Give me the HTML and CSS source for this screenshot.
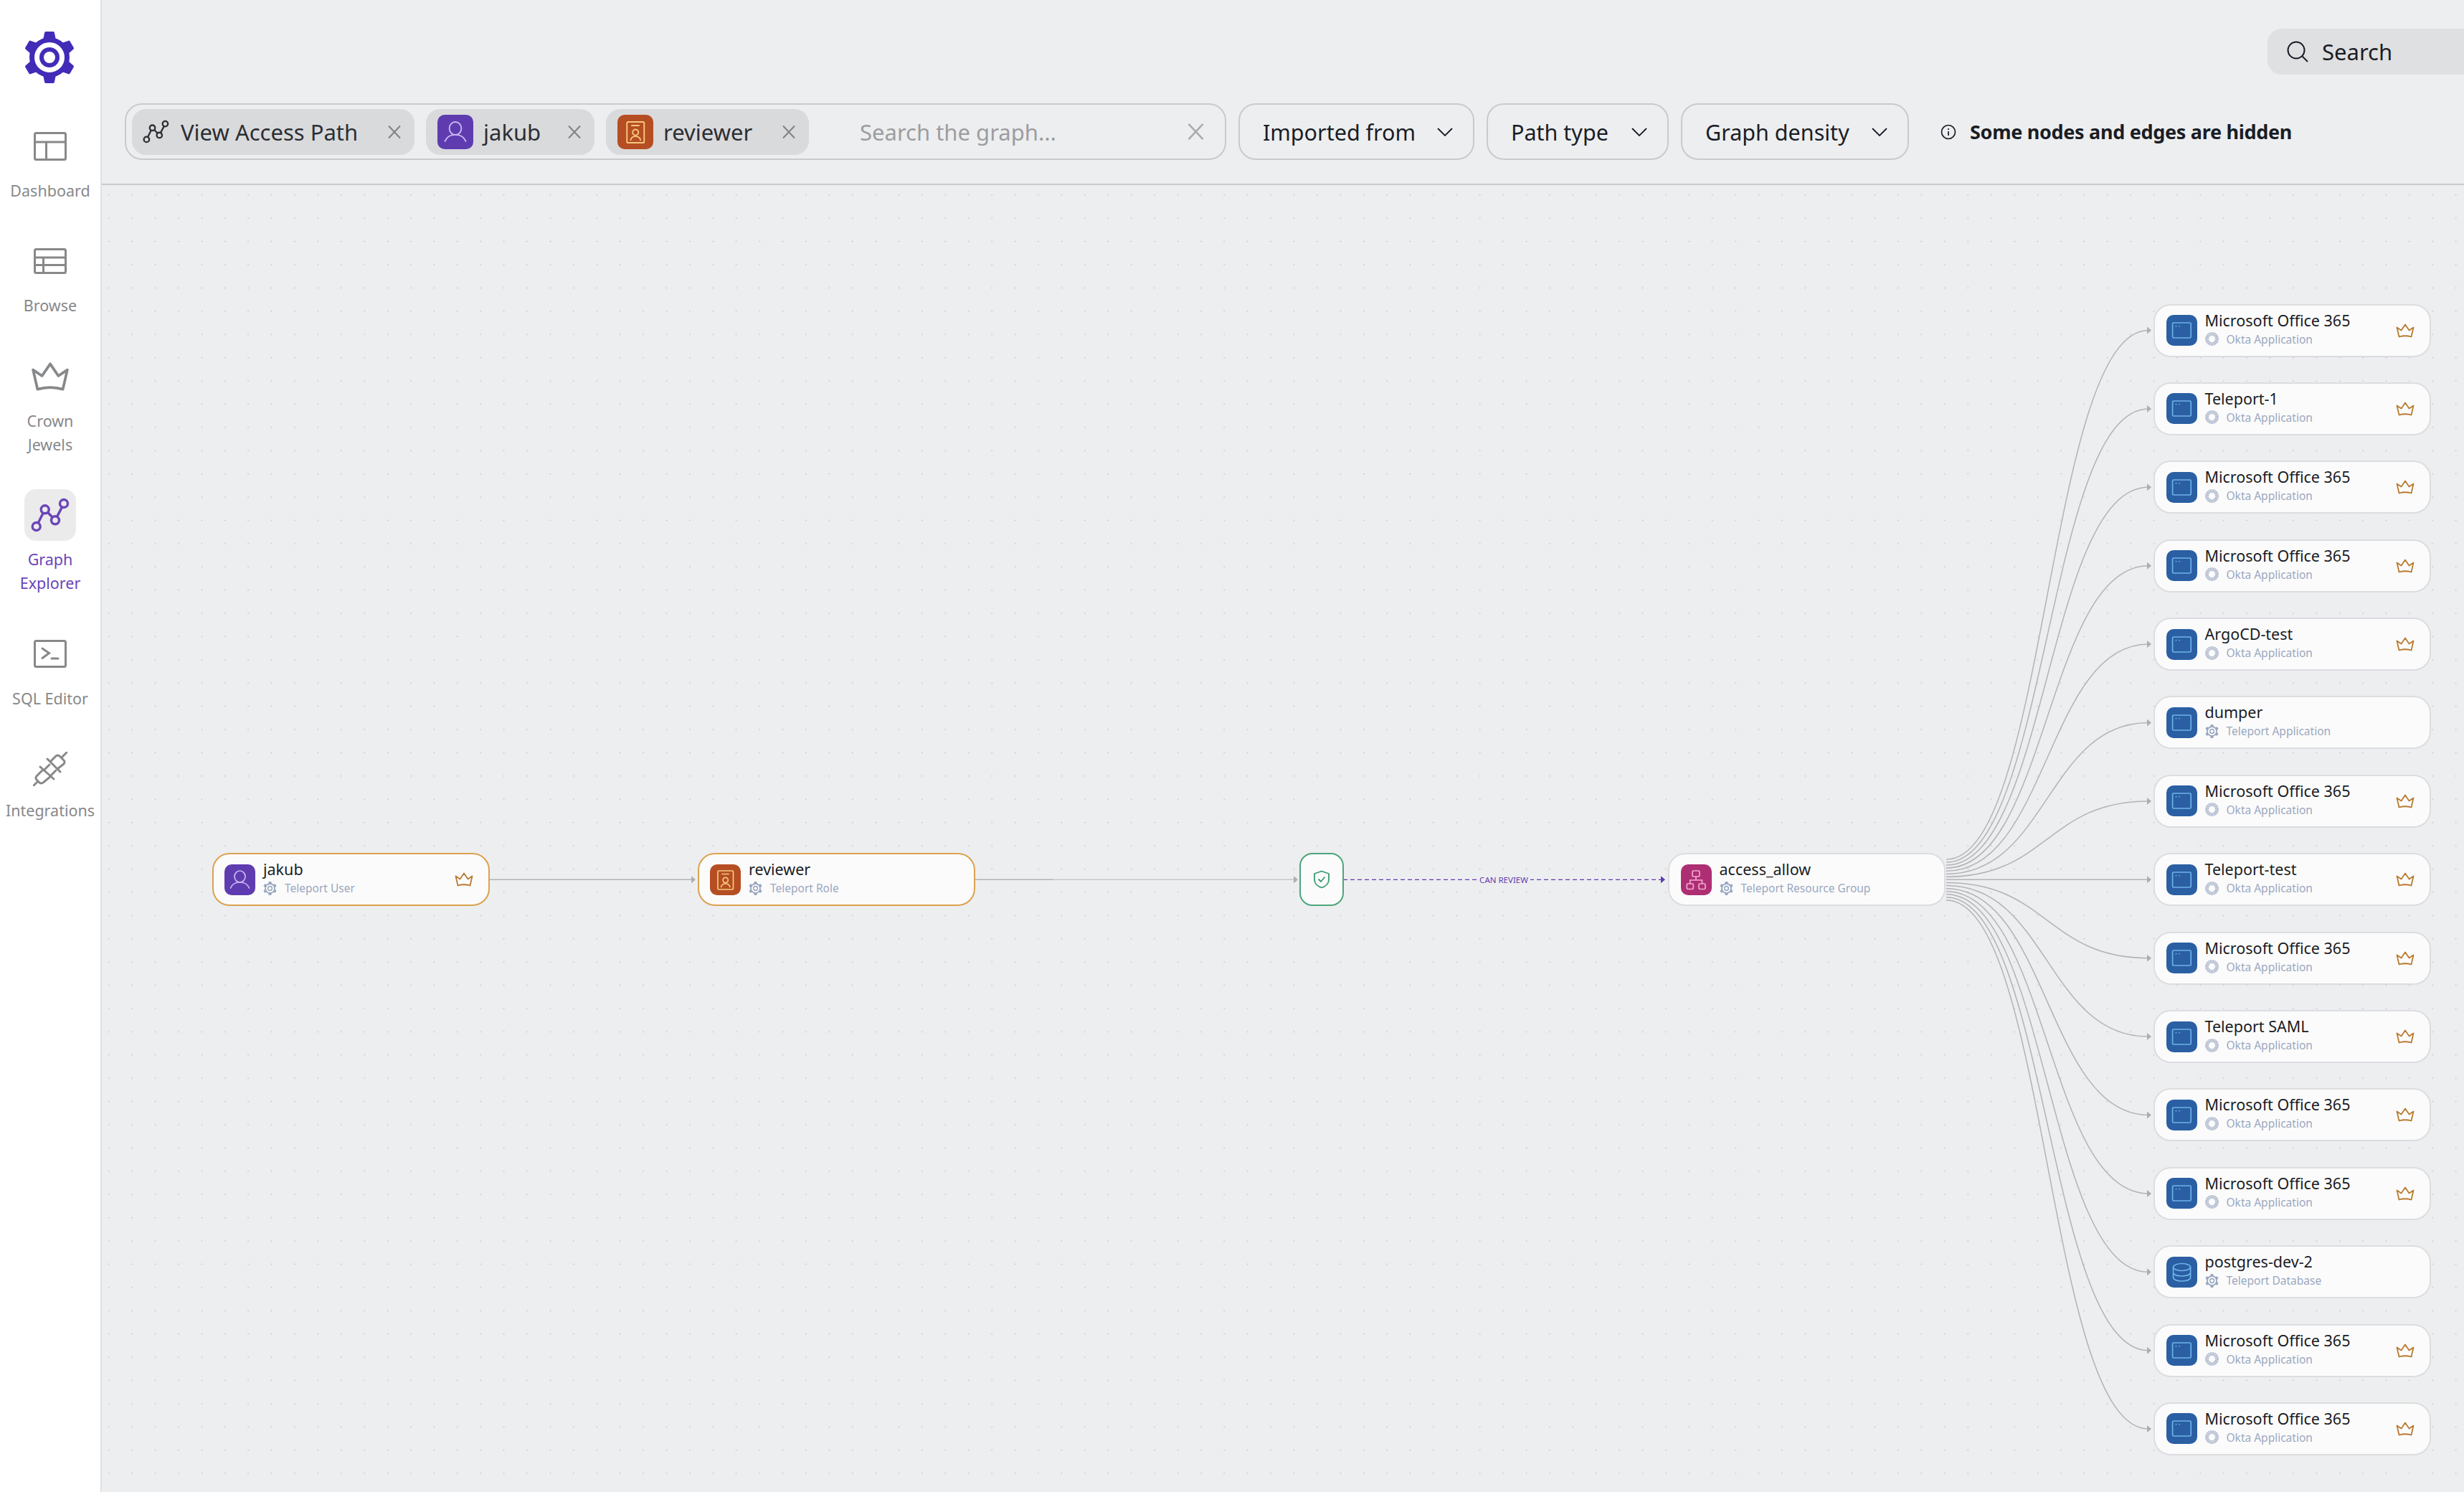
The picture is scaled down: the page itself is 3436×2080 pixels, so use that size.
FILE: index.html
```html
<!DOCTYPE html>
<html lang="en">

<head>
    <meta charset="UTF-8">
    <meta name="viewport" content="width=device-width, initial-scale=1.0">
    <title>Graph Explorer</title>
    <link rel="stylesheet" href="styles.css">
</head>

<body>
    <!-- shared icons -->
    <svg class="defs" width="0" height="0">
        <symbol id="i-gear" viewBox="0 0 70 72">
            <g fill="currentColor">
                <circle cx="35" cy="36" r="28"></circle>
                <path d="M26 12 L28 2 Q28 0 30 0 L40 0 Q42 0 42 2 L44 12 Z"></path>
                <path d="M26 12 L28 2 Q28 0 30 0 L40 0 Q42 0 42 2 L44 12 Z" transform="rotate(60 35 36)"></path>
                <path d="M26 12 L28 2 Q28 0 30 0 L40 0 Q42 0 42 2 L44 12 Z" transform="rotate(120 35 36)"></path>
                <path d="M26 12 L28 2 Q28 0 30 0 L40 0 Q42 0 42 2 L44 12 Z" transform="rotate(180 35 36)"></path>
                <path d="M26 12 L28 2 Q28 0 30 0 L40 0 Q42 0 42 2 L44 12 Z" transform="rotate(240 35 36)"></path>
                <path d="M26 12 L28 2 Q28 0 30 0 L40 0 Q42 0 42 2 L44 12 Z" transform="rotate(300 35 36)"></path>
            </g>
            <circle cx="35" cy="36" r="17.5" fill="none" stroke="#fff" stroke-width="7"></circle>
            <circle cx="35" cy="36" r="8" fill="#fff"></circle>
        </symbol>
        <symbol id="i-burst" viewBox="0 0 19 19">
            <circle cx="9.5" cy="9.5" r="7" fill="none" stroke="currentColor" stroke-width="5" stroke-dasharray="1.1 .8"></circle>
        </symbol>
        <symbol id="i-crown" viewBox="0 0 26 20">
            <path d="M1.5 5.5 L7.5 9.5 L13 1.5 L18.5 9.5 L24.5 5.5 L21.5 18.5 Q13 16 4.5 18.5 Z" fill="none" stroke="currentColor" stroke-width="1.8" stroke-linejoin="round"></path>
        </symbol>
        <symbol id="i-graph" viewBox="0 0 72 72">
            <g fill="none" stroke="currentColor" stroke-width="3.4">
                <circle cx="16.7" cy="52" r="5.5"></circle>
                <circle cx="28.7" cy="28.3" r="5.5"></circle>
                <circle cx="43" cy="43.3" r="5.5"></circle>
                <circle cx="55" cy="20" r="5.5"></circle>
                <path d="M19.2 47.1 L26.2 33.2 M32.5 32.3 L39.2 39.3 M45.5 38.4 L52.5 24.9"></path>
            </g>
        </symbol>
        <symbol id="i-user" viewBox="0 0 43 43">
            <g fill="none" stroke="currentColor" stroke-width="1.7" stroke-linecap="round">
                <ellipse cx="21.5" cy="17" rx="7.5" ry="8"></ellipse>
                <path d="M8.5 33 C11 27 16 25 21.5 25 C27 25 32 27 34.5 33"></path>
            </g>
        </symbol>
        <symbol id="i-role" viewBox="0 0 43 43">
            <g fill="none" stroke="currentColor" stroke-width="1.7" stroke-linecap="round">
                <rect x="11" y="9" width="21.5" height="26" rx="1.5"></rect>
                <path d="M17 13.5 H26"></path>
                <circle cx="21.7" cy="22" r="3.6"></circle>
                <path d="M15.5 31.5 C16.5 28 19 27 21.7 27 C24.5 27 27 28 28 31.5"></path>
            </g>
        </symbol>
        <symbol id="i-group" viewBox="0 0 43 43">
            <g fill="none" stroke="currentColor" stroke-width="1.7">
                <rect x="16" y="9" width="10" height="8" rx="1.5"></rect>
                <rect x="8.3" y="27" width="9" height="7.5" rx="1.5"></rect>
                <rect x="25" y="27" width="9" height="7.5" rx="1.5"></rect>
                <path d="M21 17 V22 M12.8 27 V22 H29.5 V27"></path>
            </g>
        </symbol>
        <symbol id="i-app" viewBox="0 0 43 43">
            <rect x="8.6" y="11" width="25.6" height="21" rx="1.5" fill="none" stroke="currentColor" stroke-width="1.7"></rect>
            <circle cx="13.5" cy="15.7" r=".9" fill="currentColor"></circle>
            <circle cx="18" cy="15.7" r=".9" fill="currentColor"></circle>
        </symbol>
        <symbol id="i-db" viewBox="0 0 43 43">
            <g fill="none" stroke="currentColor" stroke-width="1.7">
                <ellipse cx="21.6" cy="14.5" rx="12" ry="5"></ellipse>
                <path d="M9.6 14.5 V29 C9.6 32 15 34 21.6 34 C28 34 33.6 32 33.6 29 V14.5 M9.6 22 C9.6 25 15 27 21.6 27 C28 27 33.6 25 33.6 22"></path>
            </g>
        </symbol>
        <symbol id="i-x" viewBox="0 0 20 20">
            <path d="M2 1.5 L18 18.5 M18 1.5 L2 18.5" fill="none" stroke="currentColor" stroke-width="2"></path>
        </symbol>
        <symbol id="i-chevron" viewBox="0 0 22 12">
            <path d="M1 1 L11 11 L21 1" fill="none" stroke="currentColor" stroke-width="1.8"></path>
        </symbol>
    </svg>

    <aside class="sidebar">
        <svg class="logo"><use href="#i-gear"></use></svg>
        <nav class="nav">
            <a class="nav-item">
                <span class="nav-icon">
                    <svg width="46" height="40" viewBox="0 0 46 40" fill="none" stroke="currentColor" stroke-width="3">
                        <rect x="1.5" y="1.5" width="43" height="37" rx="2"></rect>
                        <path d="M1.5 14 H44.5 M17.5 14 V38.5"></path>
                    </svg>
                </span>
                Dashboard
            </a>
            <a class="nav-item">
                <span class="nav-icon">
                    <svg width="46" height="36" viewBox="0 0 46 36" fill="none" stroke="currentColor" stroke-width="3">
                        <rect x="1.5" y="1.5" width="43" height="33" rx="2"></rect>
                        <path d="M1.5 13 H44.5 M1.5 23.5 H44.5 M13.5 13 V34.5"></path>
                    </svg>
                </span>
                Browse
            </a>
            <a class="nav-item">
                <span class="nav-icon">
                    <svg width="54" height="42"><use href="#i-crown"></use></svg>
                </span>
                Crown<br>Jewels
            </a>
            <a class="nav-item active">
                <span class="nav-icon">
                    <svg width="72" height="72"><use href="#i-graph"></use></svg>
                </span>
                Graph<br>Explorer
            </a>
            <a class="nav-item">
                <span class="nav-icon">
                    <svg width="46" height="39" viewBox="0 0 46 39" fill="none" stroke="currentColor" stroke-width="3" stroke-linecap="round">
                        <rect x="1.5" y="1.5" width="43" height="36" rx="2"></rect>
                        <path d="M12 12 L21.5 18.5 L12 25.5 M25 26 H34"></path>
                    </svg>
                </span>
                SQL Editor
            </a>
            <a class="nav-item">
                <span class="nav-icon">
                    <svg width="48" height="48" viewBox="0 0 48 48" fill="none" stroke="currentColor" stroke-width="3" stroke-linecap="round">
                        <path d="M20 10 L38 28 M24 14 L32 6 Q35 4 37 6 L43 12 Q45 14 43 17 L34 24 M40 8 L47 1"></path>
                        <path d="M10 21 L29 38 M14 25 L5 34 Q3 37 5 39 L9 43 Q12 45 14 43 L25 34 M7 41 L1 47"></path>
                        <path d="M16 25 L23 18 M25 33 L32 26"></path>
                    </svg>
                </span>
                Integrations
            </a>
        </nav>
    </aside>

    <main class="main">
        <header class="header">
            <div class="top-row">
                <div class="global-search">
                    <svg width="30" height="30" viewBox="0 0 30 30" fill="none" stroke="currentColor" stroke-width="2">
                        <circle cx="13" cy="13" r="11.5"></circle>
                        <path d="M21.5 21.5 L29 29"></path>
                    </svg>
                    <span>Search</span>
                </div>
            </div>
            <div class="toolbar">
                <div class="search-box">
                    <div class="chip chip-path">
                        <svg class="chip-graph"><use href="#i-graph"></use></svg>
                        <span>View Access Path</span>
                        <svg class="chip-x"><use href="#i-x"></use></svg>
                    </div>
                    <div class="chip chip-user">
                        <svg class="chip-icon purple"><use href="#i-user"></use></svg>
                        <span>jakub</span>
                        <svg class="chip-x"><use href="#i-x"></use></svg>
                    </div>
                    <div class="chip chip-role">
                        <svg class="chip-icon orange"><use href="#i-role"></use></svg>
                        <span>reviewer</span>
                        <svg class="chip-x"><use href="#i-x"></use></svg>
                    </div>
                    <span class="placeholder">Search the graph...</span>
                    <svg class="clear-x"><use href="#i-x"></use></svg>
                </div>
                <button class="drop drop-imported">Imported from<svg><use href="#i-chevron"></use></svg></button>
                <button class="drop drop-type">Path type<svg><use href="#i-chevron"></use></svg></button>
                <button class="drop drop-density">Graph density<svg><use href="#i-chevron"></use></svg></button>
                <div class="hidden-note">
                    <svg width="22" height="22" viewBox="0 0 22 22" fill="none" stroke="currentColor" stroke-width="1.7">
                        <circle cx="11" cy="11" r="9.5"></circle>
                        <path d="M11 10 V16 M11 6 V8"></path>
                    </svg>
                    <span>Some nodes and edges are hidden</span>
                </div>
            </div>
        </header>

        <section class="canvas">
            <!-- edges use page coordinates -->
            <svg class="edges" viewBox="142 258 3294 1822">
                <defs>
                    <marker id="arrow" markerUnits="userSpaceOnUse" markerWidth="7" markerHeight="10" refX="2" refY="5" orient="auto">
                        <path d="M0 0 L6 5 L0 10 Z" fill="#adaeb1"></path>
                    </marker>
                    <marker id="arrow-purple" markerUnits="userSpaceOnUse" markerWidth="7" markerHeight="10" refX="2" refY="5" orient="auto">
                        <path d="M0 0 L6 5 L0 10 Z" fill="#5e3cb0"></path>
                    </marker>
                </defs>
                <g class="edge-lines">
                    <path marker-end="url(#arrow)" d="M683 1226.3 H966"></path>
                    <path d="M1360 1226.3 H1469"></path>
                    <path class="lighter" marker-end="url(#arrow)" d="M1469 1226.3 H1806"></path>
                    <path marker-end="url(#arrow)" d="M2714 1198 C2855 1198 2855 460.5 2996 460.5"></path>
                    <path marker-end="url(#arrow)" d="M2714 1202.1 C2855 1202.1 2855 569.9 2996 569.9"></path>
                    <path marker-end="url(#arrow)" d="M2714 1206.1 C2855 1206.1 2855 679.3 2996 679.3"></path>
                    <path marker-end="url(#arrow)" d="M2714 1210.2 C2855 1210.2 2855 788.7 2996 788.7"></path>
                    <path marker-end="url(#arrow)" d="M2714 1214.3 C2855 1214.3 2855 898.1 2996 898.1"></path>
                    <path marker-end="url(#arrow)" d="M2714 1218.4 C2855 1218.4 2855 1007.5 2996 1007.5"></path>
                    <path marker-end="url(#arrow)" d="M2714 1222.4 C2855 1222.4 2855 1116.9 2996 1116.9"></path>
                    <path marker-end="url(#arrow)" d="M2714 1226.3 H2996"></path>
                    <path marker-end="url(#arrow)" d="M2714 1230.6 C2855 1230.6 2855 1335.7 2996 1335.7"></path>
                    <path marker-end="url(#arrow)" d="M2714 1234.6 C2855 1234.6 2855 1445.1 2996 1445.1"></path>
                    <path marker-end="url(#arrow)" d="M2714 1238.7 C2855 1238.7 2855 1554.5 2996 1554.5"></path>
                    <path marker-end="url(#arrow)" d="M2714 1242.8 C2855 1242.8 2855 1663.9 2996 1663.9"></path>
                    <path marker-end="url(#arrow)" d="M2714 1246.8 C2855 1246.8 2855 1773.3 2996 1773.3"></path>
                    <path marker-end="url(#arrow)" d="M2714 1250.9 C2855 1250.9 2855 1882.7 2996 1882.7"></path>
                    <path marker-end="url(#arrow)" d="M2714 1255 C2855 1255 2855 1992.1 2996 1992.1"></path>
                </g>
                <path class="edge-dashed" marker-end="url(#arrow-purple)" d="M1873 1226.3 H2318"></path>
            </svg>
            <span class="edge-label">CAN REVIEW</span>

            <div class="node node-jakub">
                <svg class="node-icon purple"><use href="#i-user"></use></svg>
                <div class="node-text">
                    <div class="node-title">jakub</div>
                    <div class="node-sub"><svg><use href="#i-gear"></use></svg>Teleport User</div>
                </div>
                <svg class="crown"><use href="#i-crown"></use></svg>
            </div>
            <div class="node node-reviewer">
                <svg class="node-icon orange"><use href="#i-role"></use></svg>
                <div class="node-text">
                    <div class="node-title">reviewer</div>
                    <div class="node-sub"><svg><use href="#i-gear"></use></svg>Teleport Role</div>
                </div>
            </div>
            <div class="shield-node">
                <svg width="24" height="26" viewBox="0 0 24 26" fill="none" stroke="currentColor" stroke-width="1.8" stroke-linejoin="round">
                    <path d="M12 1.5 L22 5 V13 C22 19 17 23 12 24.5 C7 23 2 19 2 13 V5 Z"></path>
                    <path d="M7.5 12.5 L11 16 L16.5 9.5"></path>
                </svg>
            </div>
            <div class="node node-group">
                <svg class="node-icon pink"><use href="#i-group"></use></svg>
                <div class="node-text">
                    <div class="node-title">access_allow</div>
                    <div class="node-sub"><svg><use href="#i-gear"></use></svg>Teleport Resource Group</div>
                </div>
            </div>

            <div class="targets">
                <div class="node">
                    <svg class="node-icon blue"><use href="#i-app"></use></svg>
                    <div class="node-text">
                        <div class="node-title">Microsoft Office 365</div>
                        <div class="node-sub"><svg><use href="#i-burst"></use></svg>Okta Application</div>
                    </div>
                    <svg class="crown"><use href="#i-crown"></use></svg>
                </div>
                <div class="node">
                    <svg class="node-icon blue"><use href="#i-app"></use></svg>
                    <div class="node-text">
                        <div class="node-title">Teleport-1</div>
                        <div class="node-sub"><svg><use href="#i-burst"></use></svg>Okta Application</div>
                    </div>
                    <svg class="crown"><use href="#i-crown"></use></svg>
                </div>
                <div class="node">
                    <svg class="node-icon blue"><use href="#i-app"></use></svg>
                    <div class="node-text">
                        <div class="node-title">Microsoft Office 365</div>
                        <div class="node-sub"><svg><use href="#i-burst"></use></svg>Okta Application</div>
                    </div>
                    <svg class="crown"><use href="#i-crown"></use></svg>
                </div>
                <div class="node">
                    <svg class="node-icon blue"><use href="#i-app"></use></svg>
                    <div class="node-text">
                        <div class="node-title">Microsoft Office 365</div>
                        <div class="node-sub"><svg><use href="#i-burst"></use></svg>Okta Application</div>
                    </div>
                    <svg class="crown"><use href="#i-crown"></use></svg>
                </div>
                <div class="node">
                    <svg class="node-icon blue"><use href="#i-app"></use></svg>
                    <div class="node-text">
                        <div class="node-title">ArgoCD-test</div>
                        <div class="node-sub"><svg><use href="#i-burst"></use></svg>Okta Application</div>
                    </div>
                    <svg class="crown"><use href="#i-crown"></use></svg>
                </div>
                <div class="node">
                    <svg class="node-icon blue"><use href="#i-app"></use></svg>
                    <div class="node-text">
                        <div class="node-title">dumper</div>
                        <div class="node-sub"><svg><use href="#i-gear"></use></svg>Teleport Application</div>
                    </div>
                </div>
                <div class="node">
                    <svg class="node-icon blue"><use href="#i-app"></use></svg>
                    <div class="node-text">
                        <div class="node-title">Microsoft Office 365</div>
                        <div class="node-sub"><svg><use href="#i-burst"></use></svg>Okta Application</div>
                    </div>
                    <svg class="crown"><use href="#i-crown"></use></svg>
                </div>
                <div class="node">
                    <svg class="node-icon blue"><use href="#i-app"></use></svg>
                    <div class="node-text">
                        <div class="node-title">Teleport-test</div>
                        <div class="node-sub"><svg><use href="#i-burst"></use></svg>Okta Application</div>
                    </div>
                    <svg class="crown"><use href="#i-crown"></use></svg>
                </div>
                <div class="node">
                    <svg class="node-icon blue"><use href="#i-app"></use></svg>
                    <div class="node-text">
                        <div class="node-title">Microsoft Office 365</div>
                        <div class="node-sub"><svg><use href="#i-burst"></use></svg>Okta Application</div>
                    </div>
                    <svg class="crown"><use href="#i-crown"></use></svg>
                </div>
                <div class="node">
                    <svg class="node-icon blue"><use href="#i-app"></use></svg>
                    <div class="node-text">
                        <div class="node-title">Teleport SAML</div>
                        <div class="node-sub"><svg><use href="#i-burst"></use></svg>Okta Application</div>
                    </div>
                    <svg class="crown"><use href="#i-crown"></use></svg>
                </div>
                <div class="node">
                    <svg class="node-icon blue"><use href="#i-app"></use></svg>
                    <div class="node-text">
                        <div class="node-title">Microsoft Office 365</div>
                        <div class="node-sub"><svg><use href="#i-burst"></use></svg>Okta Application</div>
                    </div>
                    <svg class="crown"><use href="#i-crown"></use></svg>
                </div>
                <div class="node">
                    <svg class="node-icon blue"><use href="#i-app"></use></svg>
                    <div class="node-text">
                        <div class="node-title">Microsoft Office 365</div>
                        <div class="node-sub"><svg><use href="#i-burst"></use></svg>Okta Application</div>
                    </div>
                    <svg class="crown"><use href="#i-crown"></use></svg>
                </div>
                <div class="node">
                    <svg class="node-icon blue"><use href="#i-db"></use></svg>
                    <div class="node-text">
                        <div class="node-title">postgres-dev-2</div>
                        <div class="node-sub"><svg><use href="#i-gear"></use></svg>Teleport Database</div>
                    </div>
                </div>
                <div class="node">
                    <svg class="node-icon blue"><use href="#i-app"></use></svg>
                    <div class="node-text">
                        <div class="node-title">Microsoft Office 365</div>
                        <div class="node-sub"><svg><use href="#i-burst"></use></svg>Okta Application</div>
                    </div>
                    <svg class="crown"><use href="#i-crown"></use></svg>
                </div>
                <div class="node">
                    <svg class="node-icon blue"><use href="#i-app"></use></svg>
                    <div class="node-text">
                        <div class="node-title">Microsoft Office 365</div>
                        <div class="node-sub"><svg><use href="#i-burst"></use></svg>Okta Application</div>
                    </div>
                    <svg class="crown"><use href="#i-crown"></use></svg>
                </div>
            </div>
        </section>
    </main>
</body>

</html>
```

FILE: styles.css
```css
* {
    box-sizing: border-box;
}

html,
body {
    height: 100%;
}

body {
    margin: 0;
    display: flex;
    overflow: hidden;
    background: #edeef0;
    color: #1a1d25;
    font-family: "Noto Sans", "Open Sans", sans-serif;
}

.defs {
    position: absolute;
}

/* sidebar */
.sidebar {
    width: 142px;
    flex: none;
    background: #fff;
    border-right: 2px solid #e0e1e3;
}

.logo {
    display: block;
    width: 70px;
    height: 72px;
    margin: 44px 0 0 34px;
    color: #432bb8;
}

.nav {
    display: flex;
    flex-direction: column;
    gap: 46.4px;
    margin-top: 52px;
}

.nav-item {
    display: flex;
    flex-direction: column;
    align-items: center;
    text-align: center;
    color: #87888a;
    font-size: 21.5px;
    line-height: 33px;
}

.nav-icon {
    display: flex;
    align-items: center;
    justify-content: center;
    width: 72px;
    height: 72px;
    margin-bottom: 9px;
    border-radius: 16px;
}

.nav-item:last-child .nav-icon {
    margin-bottom: 5px;
}

.nav-item.active {
    color: #6a45b8;
}

.nav-item.active .nav-icon {
    background: #ebebeb;
}

/* header */
.main {
    flex: 1;
    display: flex;
    flex-direction: column;
    min-width: 0;
}

.header {
    height: 258px;
    flex: none;
    padding-top: 40px;
    border-bottom: 2px solid #c9cacd;
}

.top-row {
    display: flex;
    justify-content: flex-end;
}

.global-search {
    display: flex;
    align-items: center;
    gap: 19px;
    width: 274px;
    height: 64px;
    padding-left: 27px;
    border-radius: 20px 0 0 20px;
    background: #dfe0e2;
    font-size: 31px;
}

.toolbar {
    display: flex;
    align-items: center;
    gap: 17px;
    margin-top: 40px;
    padding-left: 32px;
}

.search-box {
    display: flex;
    align-items: center;
    gap: 16px;
    width: 1536px;
    height: 79px;
    padding: 0 28px 0 8px;
    border: 2px solid #c9cacd;
    border-radius: 24px;
}

.chip {
    display: flex;
    align-items: center;
    height: 64px;
    padding-right: 18px;
    border-radius: 20px;
    background: #d9dadc;
    color: #2c2e33;
    font-size: 31px;
}

.chip-path {
    width: 394px;
}

.chip-user {
    width: 235px;
}

.chip-role {
    width: 283px;
}

.chip-graph {
    width: 49px;
    height: 49px;
    margin: 0 10px 0 9px;
    color: #2c2e33;
}

.chip-icon {
    width: 50px;
    height: 48px;
    margin: 0 14px 0 16px;
    border-radius: 10px;
}

.chip-x {
    width: 20px;
    height: 20px;
    margin-left: auto;
    color: #808285;
}

.placeholder {
    margin-left: 55px;
    color: #9c9d9f;
    font-size: 31px;
}

.clear-x {
    width: 25px;
    height: 25px;
    margin-left: auto;
    color: #a9aaad;
}

.drop {
    display: flex;
    align-items: center;
    justify-content: space-between;
    height: 79px;
    padding: 0 28px 0 32px;
    border: 2px solid #c9cacd;
    border-radius: 24px;
    background: none;
    color: #1a1d25;
    font-family: inherit;
    font-size: 30.5px;
}

.drop svg {
    width: 22px;
    height: 12px;
}

.drop-imported {
    width: 329px;
}

.drop-type {
    width: 254px;
}

.drop-density {
    width: 318px;
}

.hidden-note {
    display: flex;
    align-items: center;
    gap: 19px;
    margin-left: 27px;
    font-size: 27px;
    font-weight: 700;
    letter-spacing: -0.3px;
}

/* graph */
.canvas {
    position: relative;
    flex: 1;
    background-image: radial-gradient(circle at 1.5px 1.5px, #c4c5c7 .8px, transparent 1.1px);
    background-size: 32.42px 32.42px;
    background-position: 8.2px 12.2px;
}

.edges {
    position: absolute;
    top: 0;
    left: 0;
    width: 100%;
    height: 100%;
}

.edge-lines path {
    fill: none;
    stroke: #b2b3b6;
    stroke-width: 1.5;
}

.edge-lines path.lighter {
    stroke: #c6c7ca;
}

.edge-dashed {
    fill: none;
    stroke: #5e3cb0;
    stroke-width: 1.3;
    stroke-dasharray: 6 4;
}

.edge-label {
    position: absolute;
    left: 1918px;
    top: 961px;
    width: 74px;
    height: 16px;
    background: #edeef0;
    color: #5e3cb0;
    font-size: 11.5px;
    line-height: 16px;
    text-align: center;
    white-space: nowrap;
}

.node {
    display: flex;
    align-items: center;
    width: 387px;
    height: 74px;
    padding: 0 21px 0 15.5px;
    border: 2px solid #dcdde0;
    border-radius: 24px;
    background: #fbfbfb;
}

.node-jakub,
.node-reviewer,
.node-group {
    position: absolute;
    top: 931px;
}

.node-jakub {
    left: 153.5px;
    border-color: #dba24f;
}

.node-reviewer {
    left: 830.5px;
    border-color: #dba24f;
}

.node-group {
    left: 2184px;
}

.shield-node {
    position: absolute;
    left: 1670px;
    top: 931px;
    display: flex;
    align-items: center;
    justify-content: center;
    width: 62px;
    height: 74px;
    border: 2px solid #4ca67c;
    border-radius: 18px;
    background: #fbfbfb;
    color: #3a9a6e;
}

.targets {
    position: absolute;
    left: 2861px;
    top: 165.5px;
    display: flex;
    flex-direction: column;
    gap: 35.4px;
}

.node-icon {
    flex: none;
    width: 43px;
    height: 43px;
    margin-right: 11px;
    border-radius: 10px;
}

.purple {
    background: #5e3cb0;
    color: #cdb6f2;
}

.orange {
    background: #b54e22;
    color: #f8c97f;
}

.pink {
    background: #ae2e74;
    color: #f3a9cf;
}

.blue {
    background: #2a5fa3;
    color: #6fb2e8;
}

.node-text {
    min-width: 0;
    margin-top: -2px;
}

.node-title {
    font-size: 21.5px;
    line-height: 26px;
    white-space: nowrap;
}

.node-sub {
    display: flex;
    align-items: center;
    gap: 11px;
    color: #9aa8c0;
    font-size: 15.5px;
    line-height: 26px;
    white-space: nowrap;
}

.node-sub svg {
    width: 19px;
    height: 19px;
}

.crown {
    flex: none;
    width: 26px;
    height: 20px;
    margin-left: auto;
    color: #b97a2f;
}
```
